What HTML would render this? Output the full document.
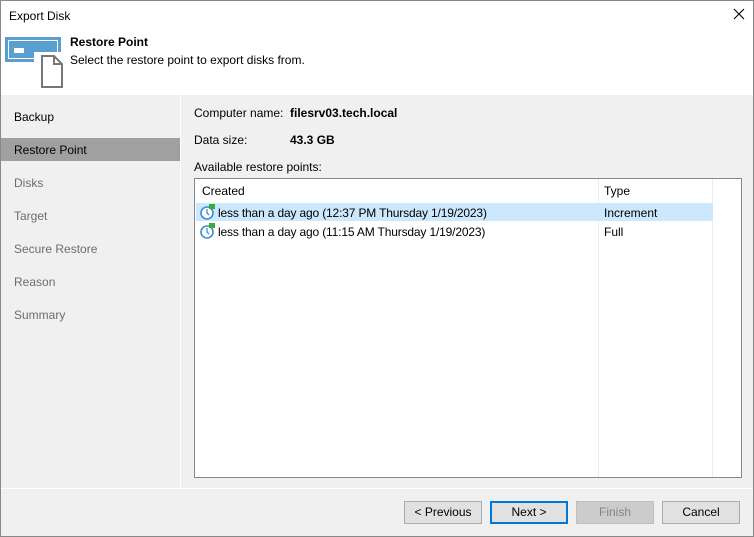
<!DOCTYPE html><html><head><style>
*{margin:0;padding:0;box-sizing:border-box}
body{width:754px;height:537px;font-family:"Liberation Sans",sans-serif;font-size:12px;color:#000;position:relative;overflow:hidden;background:#f0f0f0}
.a{position:absolute}
.r{letter-spacing:-0.16px}
.btn{position:absolute;top:501px;width:78px;height:23px;border:1px solid #adadad;background:#e1e1e1;text-align:center;line-height:21px}
</style></head><body>
<div class="a" style="left:0;top:0;width:754px;height:537px;border:1px solid #888;z-index:5"></div>
<div class="a" style="left:0;top:0;width:754px;height:95px;background:#fff"></div>
<div class="a" style="left:9px;top:9px">Export Disk</div>
<svg class="a" style="left:733px;top:8px" width="12" height="12"><path d="M1 1L11 11M11 1L1 11" stroke="#000" stroke-width="1.1"/></svg>
<svg class="a" style="left:4px;top:36px" width="62" height="54">
<rect x="1" y="1" width="56" height="25" fill="#5b9fd1"/><rect x="4.5" y="4.5" width="49" height="18" fill="none" stroke="#fff" stroke-width="1"/>
<rect x="10" y="12" width="10" height="5" fill="#fff"/>
<rect x="30" y="16" width="31" height="38" fill="#fff"/>
<path d="M38 20 H50 L58 28 V51 H38 Z M50 20 V28 H58" fill="#fff" stroke="#777" stroke-width="2"/>
</svg>
<div class="a" style="left:70px;top:35px;font-weight:bold">Restore Point</div>
<div class="a" style="left:70px;top:53px">Select the restore point to export disks from.</div>
<div class="a" style="left:180px;top:95px;width:1px;height:393px;background:#fff"></div>
<div class="a" style="left:0;top:488px;width:754px;height:1px;background:#fff"></div>
<div class="a" style="left:1px;top:138px;width:179px;height:23px;background:#a0a0a0"></div>
<div class="a" style="left:14px;top:110px">Backup</div>
<div class="a" style="left:14px;top:143px">Restore Point</div>
<div class="a" style="left:14px;top:176px;color:#6d6d6d">Disks</div>
<div class="a" style="left:14px;top:209px;color:#6d6d6d">Target</div>
<div class="a" style="left:14px;top:242px;color:#6d6d6d">Secure Restore</div>
<div class="a" style="left:14px;top:275px;color:#6d6d6d">Reason</div>
<div class="a" style="left:14px;top:308px;color:#6d6d6d">Summary</div>
<div class="a" style="left:194px;top:106px">Computer name:</div>
<div class="a" style="left:290px;top:106px;font-weight:bold">filesrv03.tech.local</div>
<div class="a" style="left:194px;top:133px">Data size:</div>
<div class="a" style="left:290px;top:133px;font-weight:bold">43.3 GB</div>
<div class="a" style="left:194px;top:160px">Available restore points:</div>
<div class="a" style="left:194px;top:178px;width:548px;height:300px;background:#fff;border:1px solid #828790"></div>
<div class="a" style="left:598px;top:179px;width:1px;height:298px;background:#e5eef7"></div>
<div class="a" style="left:712px;top:179px;width:1px;height:298px;background:#e5eef7"></div>
<div class="a" style="left:202px;top:184px">Created</div>
<div class="a" style="left:604px;top:184px">Type</div>
<div class="a" style="left:196px;top:203px;width:517px;height:18px;background:#cce8ff"></div>
<svg class="a" style="left:199px;top:203px" width="18" height="38">
<g><circle cx="8" cy="10" r="6" fill="#fff" stroke="#3d8fd1" stroke-width="1.6"/><path d="M8 6V10L10 12" stroke="#3d8fd1" fill="none" stroke-width="1.3"/><rect x="10" y="1" width="6" height="5" fill="#3caa3c"/></g>
<g transform="translate(0,19)"><circle cx="8" cy="10" r="6" fill="#fff" stroke="#3d8fd1" stroke-width="1.6"/><path d="M8 6V10L10 12" stroke="#3d8fd1" fill="none" stroke-width="1.3"/><rect x="10" y="1" width="6" height="5" fill="#3caa3c"/></g>
</svg>
<div class="a r" style="left:218px;top:206px">less than a day ago (12:37 PM Thursday 1/19/2023)</div>
<div class="a" style="left:604px;top:206px">Increment</div>
<div class="a r" style="left:218px;top:225px">less than a day ago (11:15 AM Thursday 1/19/2023)</div>
<div class="a" style="left:604px;top:225px">Full</div>
<div class="btn" style="left:404px">&lt; Previous</div>
<div class="btn" style="left:490px;border:2px solid #0078d7;line-height:19px">Next &gt;</div>
<div class="btn" style="left:576px;background:#ccc;border-color:#bfbfbf;color:#838383">Finish</div>
<div class="btn" style="left:662px">Cancel</div>
</body></html>
